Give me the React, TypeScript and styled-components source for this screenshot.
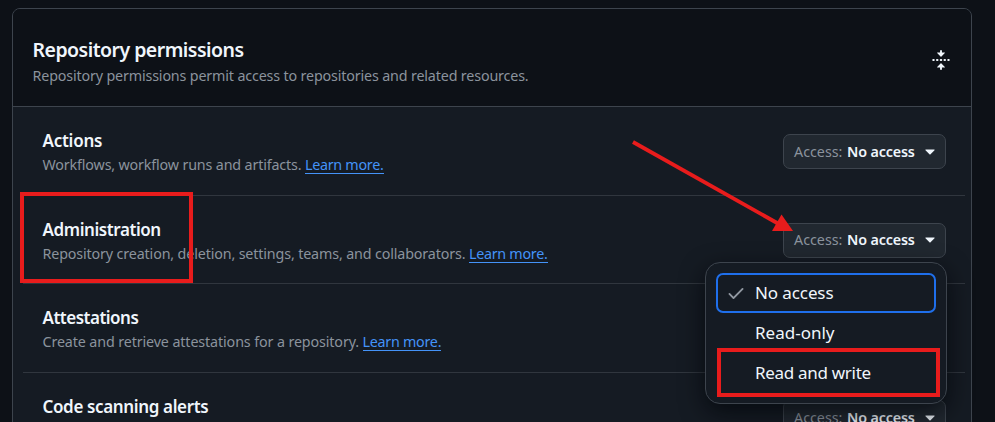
import React from "react";
import styled, { createGlobalStyle } from "styled-components";

const GlobalStyle = createGlobalStyle`
  * { box-sizing: border-box; }
  html, body { margin: 0; background: #0d1117; overflow: hidden; }
  body { font-family: "Segoe UI", "Noto Sans", sans-serif; color: #f0f6fc; }
`;

const Page = styled.main`
  position: relative;
  height: 422px;
  padding: 8px 23px 0 12px;
  overflow: hidden;
`;

const Panel = styled.section`
  height: 450px;
  border: 1px solid #3d444d;
  border-radius: 8px 8px 0 0;
  background: #151b23;
`;

const PanelHeader = styled.header`
  display: flex;
  align-items: center;
  justify-content: space-between;
  height: 98px;
  padding: 5px 20px 0 19.5px;
  border-bottom: 1px solid #3d444d;
  border-radius: 7px 7px 0 0;
  background: #0d1117;
`;

const HeaderText = styled.div`
  padding-top: 4px;
`;

const Fit = styled.span<{ $ls?: number }>`
  letter-spacing: ${(p) => p.$ls ?? 0}px;
`;

const Title = styled.h2`
  margin: 0;
  font-size: 19.5px;
  font-weight: 600;
  line-height: 28px;
  white-space: nowrap;
`;

const Description = styled.p`
  margin: 0;
  color: #8b939d;
  font-size: 14.3px;
  line-height: 24px;
  white-space: nowrap;
`;

const FoldButton = styled.button`
  display: flex;
  margin: 0;
  padding: 0;
  border: 0;
  background: none;
  color: #f0f6fc;
`;

const Rows = styled.ul`
  margin: 0;
  padding: 0 6px 0 10px;
  list-style: none;
`;

const Row = styled.li`
  display: flex;
  align-items: flex-start;
  justify-content: space-between;
  height: 88.7px;
  padding: 22px 19px 0 19.5px;
  border-bottom: 1px solid #30363e;
`;

const RowTitle = styled.h3`
  margin: 0;
  font-size: 17px;
  font-weight: 600;
  line-height: 24px;
  white-space: nowrap;
`;

const LearnMore = styled.a`
  display: inline-block;
  height: 21px;
  line-height: 24px;
  color: #4493f8;
  border-bottom: 1px solid #4493f8;
  text-decoration: none;
`;

const Picker = styled.div`
  position: relative;
  margin-top: 5px;
`;

const AccessButton = styled.button`
  display: flex;
  align-items: center;
  width: 163px;
  height: 35px;
  padding: 0 10px;
  border: 1px solid #3d444d;
  border-radius: 7px;
  background: #212830;
  color: #f0f6fc;
  font: 600 14.3px/20px "Segoe UI", "Noto Sans", sans-serif;
  text-align: left;
  white-space: nowrap;
`;

const AccessLabel = styled.span`
  width: 53px;
  color: #8b939d;
  font-weight: 400;
`;

const AccessValue = styled.span`
  flex: 1;
`;

const Menu = styled.div`
  position: absolute;
  z-index: 1;
  top: 39px;
  right: -1px;
  width: 242px;
  height: 142px;
  padding: 10px;
  border: 1px solid #3d444d;
  border-radius: 15px;
  background: #151b23;
  box-shadow: 0 8px 24px rgba(1, 4, 9, 0.7);
`;

const MenuItem = styled.div<{ $selected?: boolean }>`
  display: flex;
  align-items: center;
  height: 40px;
  padding-left: 8px;
  border: 2px solid ${(p) => (p.$selected ? "#1f6feb" : "transparent")};
  border-radius: 7px;
  font-size: 17px;
  line-height: 24px;
  white-space: nowrap;
`;

const CheckSlot = styled.span`
  display: flex;
  width: 29px;
  color: #9198a1;
`;

const Highlight = styled.div<{ $x: number; $y: number; $w: number; $h: number }>`
  position: absolute;
  z-index: 2;
  left: ${(p) => p.$x}px;
  top: ${(p) => p.$y}px;
  width: ${(p) => p.$w}px;
  height: ${(p) => p.$h}px;
  border: 4px solid #e81c1c;
`;

const Arrow = styled.svg`
  position: absolute;
  z-index: 2;
  left: 625px;
  top: 135px;
`;

const FoldIcon = () => (
  <svg width="20" height="20" viewBox="0 0 16 16" fill="currentColor">
    <path d="M10.896 2H8.75V.75a.75.75 0 0 0-1.5 0V2H5.104a.25.25 0 0 0-.177.427l2.896 2.896a.25.25 0 0 0 .354 0l2.896-2.896A.25.25 0 0 0 10.896 2ZM8.75 15.25a.75.75 0 0 1-1.5 0V14H5.104a.25.25 0 0 1-.177-.427l2.896-2.896a.25.25 0 0 1 .354 0l2.896 2.896a.25.25 0 0 1-.177.427H8.75v1.25Zm-6.5-6.5a.75.75 0 0 0 0-1.5h-.5a.75.75 0 0 0 0 1.5h.5ZM6 8a.75.75 0 0 1-.75.75h-.5a.75.75 0 0 1 0-1.5h.5A.75.75 0 0 1 6 8Zm2.25.75a.75.75 0 0 0 0-1.5h-.5a.75.75 0 0 0 0 1.5h.5ZM12 8a.75.75 0 0 1-.75.75h-.5a.75.75 0 0 1 0-1.5h.5A.75.75 0 0 1 12 8Zm2.25.75a.75.75 0 0 0 0-1.5h-.5a.75.75 0 0 0 0 1.5h.5Z" />
  </svg>
);

const CheckIcon = () => (
  <svg width="20" height="20" viewBox="0 0 16 16" fill="currentColor">
    <path d="M13.78 4.22a.75.75 0 0 1 0 1.06l-7.25 7.25a.75.75 0 0 1-1.06 0L2.22 9.28a.751.751 0 0 1 .018-1.042.751.751 0 0 1 1.042-.018L6 10.94l6.72-6.72a.75.75 0 0 1 1.06 0Z" />
  </svg>
);

const CaretIcon = () => (
  <svg width="10" height="6" viewBox="0 0 10 6" fill="currentColor">
    <path d="M.8.5h8.4a.4.4 0 0 1 .3.7L5.3 5.4a.4.4 0 0 1-.6 0L.5 1.2A.4.4 0 0 1 .8.5Z" />
  </svg>
);

interface Permission {
  name: string;
  ls: number;
  text?: string;
  textLs?: number;
  open?: boolean;
}

const permissions: Permission[] = [
  { name: "Actions", ls: -0.25, text: "Workflows, workflow runs and artifacts.", textLs: -0.16 },
  {
    name: "Administration",
    ls: -0.42,
    text: "Repository creation, deletion, settings, teams, and collaborators.",
    textLs: -0.143,
    open: true,
  },
  { name: "Attestations", ls: -0.5, text: "Create and retrieve attestations for a repository.", textLs: -0.12 },
  { name: "Code scanning alerts", ls: -0.36 },
];

const AccessMenu = () => (
  <Menu role="menu">
    <MenuItem $selected>
      <CheckSlot><CheckIcon /></CheckSlot>
      <Fit $ls={-0.1}>No access</Fit>
    </MenuItem>
    <MenuItem><CheckSlot /><Fit>Read-only</Fit></MenuItem>
    <MenuItem><CheckSlot /><Fit $ls={-0.3}>Read and write</Fit></MenuItem>
  </Menu>
);

export default function App() {
  return (
    <Page>
      <GlobalStyle />
      <Panel>
        <PanelHeader>
          <HeaderText>
            <Title><Fit $ls={-0.53}>Repository permissions</Fit></Title>
            <Description>
              <Fit $ls={-0.157}>Repository permissions permit access to repositories and related resources.</Fit>
            </Description>
          </HeaderText>
          <FoldButton aria-label="Collapse"><FoldIcon /></FoldButton>
        </PanelHeader>
        <Rows>
          {permissions.map((p) => (
            <Row key={p.name}>
              <div>
                <RowTitle><Fit $ls={p.ls}>{p.name}</Fit></RowTitle>
                {p.text && (
                  <Description>
                    <Fit $ls={p.textLs}>{p.text} </Fit>
                    <LearnMore><Fit $ls={-0.27}>Learn more.</Fit></LearnMore>
                  </Description>
                )}
              </div>
              <Picker>
                <AccessButton>
                  <AccessLabel><Fit>Access:</Fit></AccessLabel>
                  <AccessValue><Fit $ls={-0.15}>No access</Fit></AccessValue>
                  <CaretIcon />
                </AccessButton>
                {p.open && <AccessMenu />}
              </Picker>
            </Row>
          ))}
        </Rows>
      </Panel>
      <Highlight $x={20} $y={192} $w={173} $h={91} />
      <Highlight $x={717} $y={348} $w={223} $h={49} />
      <Arrow width="180" height="110" viewBox="625 135 180 110">
        <path d="M633 142 778 223.5" stroke="#e81c1c" strokeWidth="3.8" />
        <path d="M781.5 214.5 793 231 772 231Z" fill="#e81c1c" />
      </Arrow>
    </Page>
  );
}
